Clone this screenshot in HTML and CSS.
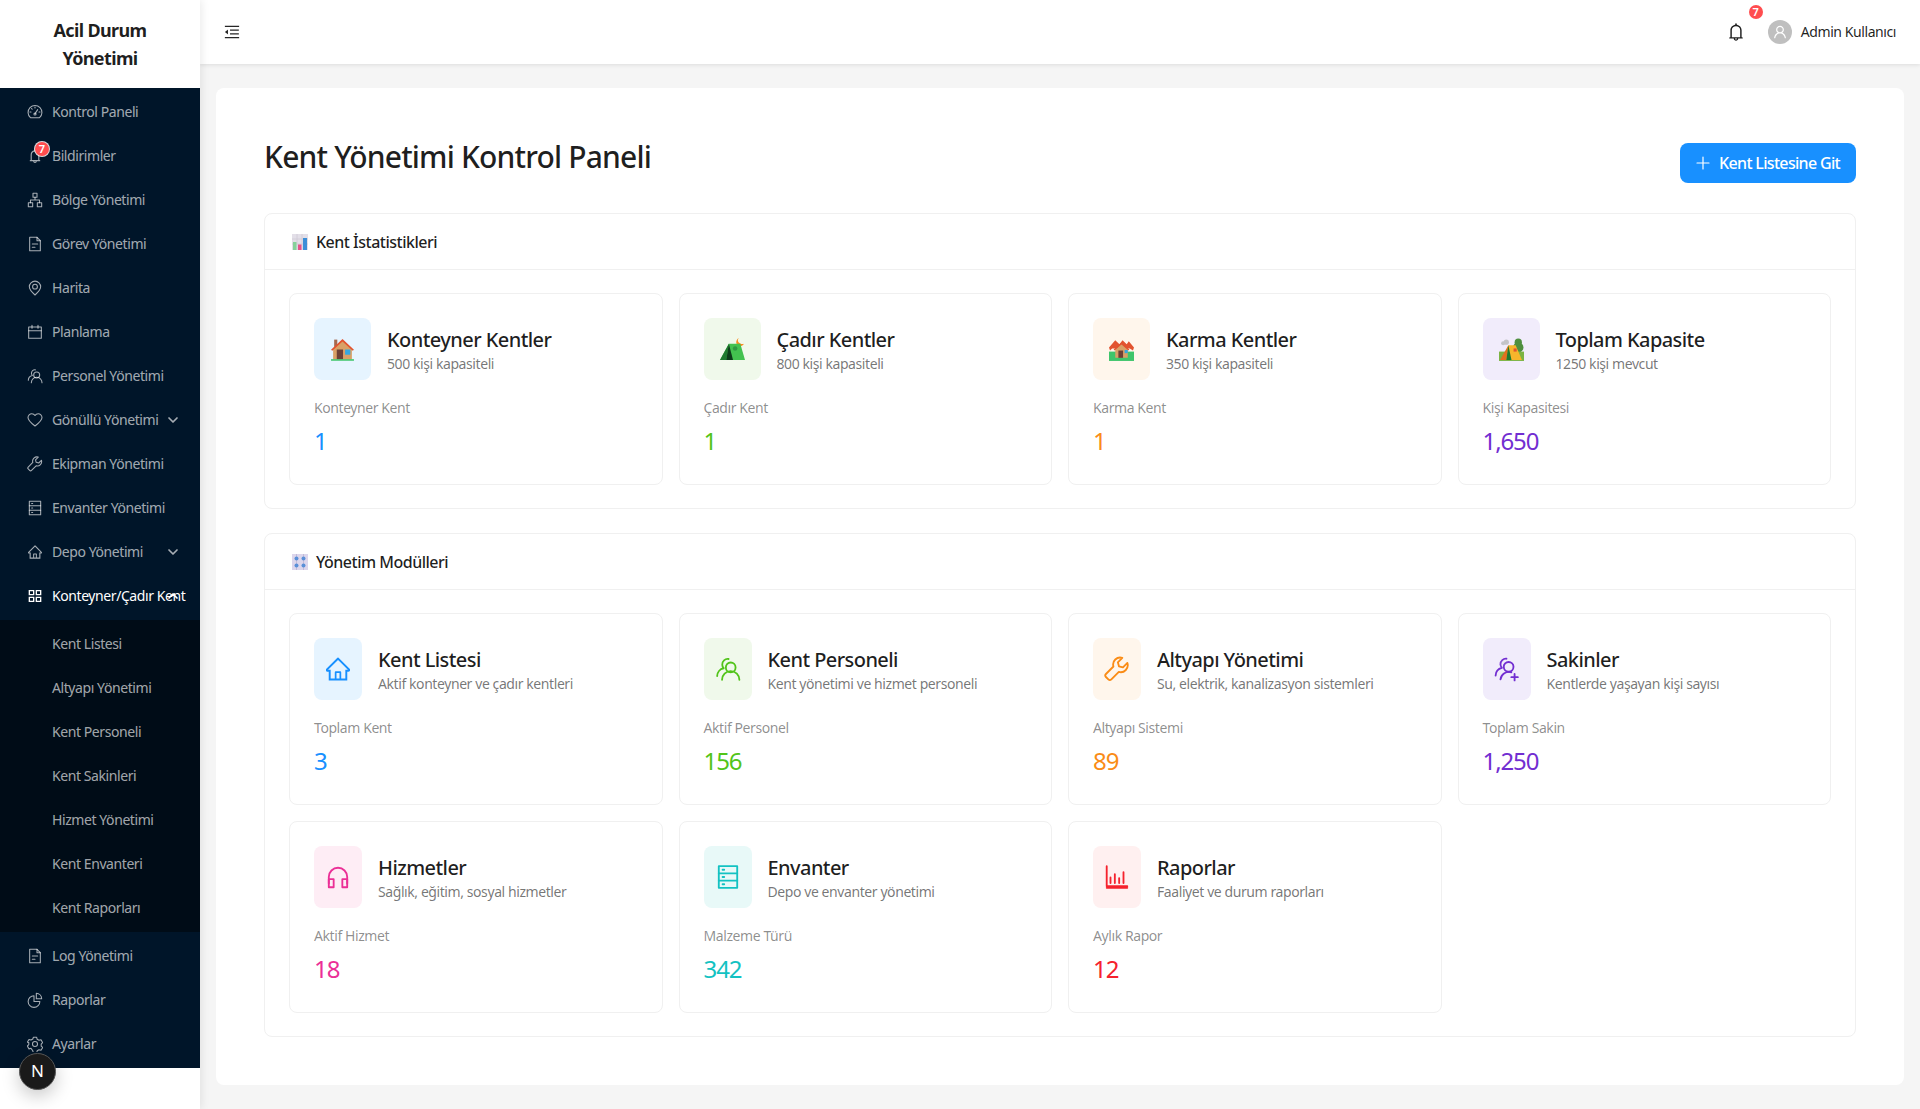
FILE: index.html
```html
<!DOCTYPE html>
<html lang="tr">
<head>
<meta charset="utf-8">
<title>Acil Durum Yönetimi</title>
<link rel="stylesheet" href="styles.css">
</head>
<body>
<svg class="defs" aria-hidden="true">
  <symbol id="i-dash" viewBox="0 0 24 24"><path d="M5.2 20.5A10.4 10.4 0 1 1 18.8 20.5Z"/><path d="M12 14.5 16 8.5"/><circle cx="12" cy="15" r="1.6"/><path d="M4.5 12H6M12 4.6V6M19.5 12H18M6.8 6.8l1 1"/></symbol>
  <symbol id="i-bell" viewBox="64 64 896 896"><path class="solid" d="M816 768h-24V428c0-141.1-104.3-257.7-240-277.1V112c0-22.1-17.9-40-40-40s-40 17.9-40 40v38.9c-135.7 19.4-240 136-240 277.1v340h-24c-17.7 0-32 14.3-32 32v32c0 4.4 3.6 8 8 8h216c0 61.8 50.2 112 112 112s112-50.2 112-112h216c4.4 0 8-3.6 8-8v-32c0-17.7-14.3-32-32-32zM512 888c-26.5 0-48-21.5-48-48h96c0 26.5-21.5 48-48 48zM304 768V428c0-55.6 21.6-107.8 60.9-147.1S456.4 220 512 220c55.6 0 107.8 21.6 147.1 60.9S720 372.4 720 428v340H304z"/></symbol>
  <symbol id="i-cluster" viewBox="0 0 24 24"><rect x="9" y="2" width="6" height="6"/><rect x="2" y="16" width="6.5" height="6"/><rect x="15.5" y="16" width="6.5" height="6"/><path d="M12 8v4M5.2 16v-4h13.6v4"/></symbol>
  <symbol id="i-file" viewBox="0 0 24 24"><path d="M4 2h11l5 5v15H4Z"/><path d="M15 2v5h5M8 12h8M8 17h4"/></symbol>
  <symbol id="i-pin" viewBox="0 0 24 24"><path d="M12 22.5C7 18 3.5 14.500 3.500 10.200a8.500 8.500 0 0 1 17 0C20.500 14.500 17 18 12 22.500Z"/><circle cx="12" cy="10" r="3.600"/></symbol>
  <symbol id="i-cal" viewBox="0 0 24 24"><rect x="2.500" y="4.500" width="19" height="17"/><path d="M2.500 10h19M7.500 2v4.500M16.500 2v4.500"/></symbol>
  <symbol id="i-team" viewBox="0 0 24 24"><circle cx="14.500" cy="10.500" r="4.500"/><path d="M6.500 22a8 8 0 0 1 16 0"/><path d="M12.500 2.800a5 5 0 0 0-5.800 5.200 5 5 0 0 0 1.300 3.300A7.500 7.500 0 0 0 2 18.500"/></symbol>
  <symbol id="i-teamadd" viewBox="0 0 24 24"><circle cx="13.500" cy="10" r="4.500"/><path d="M6 21.500a8 8 0 0 1 10-6.500"/><path d="M11.500 2.500a5 5 0 0 0-5.500 5 5 5 0 0 0 1.300 3.500A7.500 7.500 0 0 0 1.500 18"/><path d="M19 16.500v6M16 19.500h6"/></symbol>
  <symbol id="i-heart" viewBox="0 0 24 24"><path d="M12 21C5.500 16 1.500 12.500 1.500 8.200A5.700 5.700 0 0 1 7.300 2.600C9.200 2.600 11 3.600 12 5.300 13 3.600 14.800 2.600 16.700 2.600a5.700 5.700 0 0 1 5.800 5.600C22.500 12.500 18.500 16 12 21Z"/></symbol>
  <symbol id="i-tool" viewBox="0 0 24 24"><path d="M21.600 6.400 17.500 10.500 13.800 9.500 12.800 5.800 16.900 1.700A6.500 6.500 0 0 0 8.700 9.700L1.800 16.600a2 2 0 0 0 0 2.800L4 21.600a2 2 0 0 0 2.800 0L13.700 14.700A6.500 6.500 0 0 0 21.600 6.400Z"/></symbol>
  <symbol id="i-db" viewBox="0 0 24 24"><rect x="3.500" y="2" width="17" height="20"/><path d="M3.500 8.700h17M3.500 15.300h17M7 5.300h1.500M7 12h1.500M7 18.700h1.500"/></symbol>
  <symbol id="i-home" viewBox="64 64 896 896"><path class="solid" d="M946.5 505L560.1 118.8l-25.9-25.9a31.5 31.5 0 0 0-44.4 0L77.5 505a63.9 63.9 0 0 0-18.8 46c.4 35.2 29.700 63.300 64.900 63.300h42.500V940h691.800V614.300h43.400c17.100 0 33.200-6.700 45.300-18.800a63.600 63.600 0 0 0 18.700-45.300c0-17-6.700-33.100-18.800-45.200zM568 868H456V664h112v204zm217.900-325.700V868H632V640c0-22.100-17.900-40-40-40H432c-22.100 0-40 17.900-40 40v228H238.100V542.300h-96l370-369.700 23.100 23.100L882 542.300h-96.100z"/></symbol>
  <symbol id="i-apps" viewBox="0 0 24 24"><path class="solid" d="M2.500 3h8.500v8H2.500ZM13 3h8.500v8H13ZM2.500 13h8.500v8H2.500ZM13 13h8.500v8H13Z"/><path class="knock" d="M4.500 5h4.500v4H4.500ZM15 5h4.500v4H15ZM4.500 15h4.500v4H4.500ZM15 15h4.500v4H15Z"/></symbol>
  <symbol id="i-pie" viewBox="0 0 24 24"><path d="M10.500 5.500a8.800 8.800 0 1 0 8.800 8.800H10.500Z"/><path d="M14 2a8.500 8.500 0 0 1 8 8h-8Z"/></symbol>
  <symbol id="i-gear" viewBox="0 0 24 24"><path d="M9.500 2h5l.8 3 2.700 1.500 3-.8 2.500 4.300-2.200 2.200v3l2.200 2-2.500 4.300-3-.8-2.700 1.500-.8 3h-5l-.8-3L6 18.500l-3 .8L.5 15l2.200-2.200v-3L.5 9.500 3 5.200l3 .8 2.700-1.500Z"/><circle cx="12" cy="12" r="3.800"/></symbol>
  <symbol id="i-phones" viewBox="0 0 24 24"><path d="M3.500 18V12a8.500 8.500 0 0 1 17 0v6"/><rect x="3.500" y="14" width="4.500" height="7.500"/><rect x="16" y="14" width="4.500" height="7.500"/></symbol>
  <symbol id="i-chart" viewBox="0 0 24 24"><path d="M2.500 2v18.500h19M2.500 22h19"/><path d="M6 12.500v5M10 9.500v8M14 13v4.500M18 7.500v10"/></symbol>
  <symbol id="i-house" viewBox="0 0 24 24"><rect class="e-ch" x="4" y="2.500" width="3" height="7"/><path class="e-wall" d="M3 11 12 3l9 8v10.500H3Z"/><path class="e-roof" d="M1 12.300 12 2l11 10.300-1.200 1L12 4.400 2.200 13.300Z"/><rect class="e-door" x="6.500" y="12" width="6" height="9.500"/><rect class="e-win" x="14.500" y="12" width="5" height="5"/><rect class="e-grass" x="1" y="21.300" width="22" height="1.500"/></symbol>
  <symbol id="i-tent" viewBox="0 0 24 24"><path class="e-moon" d="M18 1c-1.500 2-1 4 1 5s3 1 4 .500c-1 2-4 3-6 1.500s-2-5 1-7Z"/><path class="e-tent" d="M8.500 6.500h11L24 22H0Z"/><path class="e-tdark" d="M8.500 6.500 0 22h6Z"/><path class="e-tdk2" d="M8.500 6.500 6 22h6.500Z"/><circle class="e-leaf" cx="14.500" cy="11" r="2.200"/></symbol>
  <symbol id="i-houses" viewBox="0 0 24 24"><path class="e-grass" d="M0 14h24v9H0Z"/><path class="e-roof" d="M0 10 6 3l4 4 3-4 4 4 2-3 5 6-1 3-3-2H3l-2 2Z"/><path class="e-wall" d="M6 12l6-5 6 5v8H6Z"/><path class="e-roof" d="M4.500 12 12 5l7.500 7-1 1L12 7l-6.500 6Z"/><rect class="e-door" x="9" y="13" width="4.500" height="7"/><rect class="e-win" x="15" y="12.500" width="3" height="3"/></symbol>
  <symbol id="i-camp" viewBox="0 0 24 24"><circle class="e-smoke" cx="4" cy="6" r="2"/><circle class="e-smoke" cx="7" cy="5" r="2.500"/><circle class="e-tree" cx="18.500" cy="5" r="3.500"/><circle class="e-tree" cx="18.500" cy="10" r="5"/><path class="e-grass2" d="M0 14h24v9H0Z"/><path class="e-yel" d="M9 8h7l6 14H4Z"/><path class="e-org" d="M9 8 1 22h6Z"/><path class="e-tdark" d="M9 8 7 22h5Z"/><rect class="e-roof" x="14" y="11" width="3" height="3"/></symbol>
  <symbol id="i-bars" viewBox="0 0 16 16"><rect class="e-paper" width="16" height="16"/><path class="e-gridl" d="M0 5h16M0 10h16M5 0v16M10 0v16"/><rect class="e-gbar" x="1" y="8" width="3.500" height="8"/><rect class="e-pbar" x="6" y="10.500" width="3.500" height="5.500"/><rect class="e-bbar" x="11" y="4" width="4" height="12"/></symbol>
  <symbol id="i-dial" viewBox="0 0 16 16"><rect class="e-lav" width="16" height="16"/><path class="e-slot" d="M4.500 0v16M11.500 0v16"/><circle class="e-knob" cx="4.500" cy="4.500" r="2"/><circle class="e-knob" cx="11.500" cy="4.500" r="2"/><circle class="e-knob" cx="4.500" cy="11.500" r="2"/><circle class="e-knob" cx="11.500" cy="11.500" r="2"/></symbol>
</svg>

<aside class="sidebar">
  <div class="logo">Acil Durum<br>Yönetimi</div>
  <nav class="menu">
    <a class="item"><svg class="mi"><use href="#i-dash"/></svg><span class="txt">Kontrol Paneli</span></a>
    <a class="item"><span class="bell-wrap"><svg class="mi ant"><use href="#i-bell"/></svg><b class="badge side-badge">7</b></span><span class="txt">Bildirimler</span></a>
    <a class="item"><svg class="mi"><use href="#i-cluster"/></svg><span class="txt">Bölge Yönetimi</span></a>
    <a class="item"><svg class="mi"><use href="#i-file"/></svg><span class="txt">Görev Yönetimi</span></a>
    <a class="item"><svg class="mi"><use href="#i-pin"/></svg><span class="txt">Harita</span></a>
    <a class="item"><svg class="mi"><use href="#i-cal"/></svg><span class="txt">Planlama</span></a>
    <a class="item"><svg class="mi"><use href="#i-team"/></svg><span class="txt">Personel Yönetimi</span></a>
    <a class="item"><svg class="mi"><use href="#i-heart"/></svg><span class="txt">Gönüllü Yönetimi</span><svg class="chev" viewBox="0 0 12 12"><path d="M2 4l4 4 4-4"/></svg></a>
    <a class="item"><svg class="mi"><use href="#i-tool"/></svg><span class="txt">Ekipman Yönetimi</span></a>
    <a class="item"><svg class="mi"><use href="#i-db"/></svg><span class="txt">Envanter Yönetimi</span></a>
    <a class="item"><svg class="mi ant"><use href="#i-home"/></svg><span class="txt">Depo Yönetimi</span><svg class="chev" viewBox="0 0 12 12"><path d="M2 4l4 4 4-4"/></svg></a>
    <a class="item active"><svg class="mi"><use href="#i-apps"/></svg><span class="txt">Konteyner/Çadır Kent</span><svg class="chev" viewBox="0 0 12 12"><path d="M2 8l4-4 4 4"/></svg></a>
    <div class="submenu">
      <a class="item sub"><span class="txt">Kent Listesi</span></a>
      <a class="item sub"><span class="txt">Altyapı Yönetimi</span></a>
      <a class="item sub"><span class="txt">Kent Personeli</span></a>
      <a class="item sub"><span class="txt">Kent Sakinleri</span></a>
      <a class="item sub"><span class="txt">Hizmet Yönetimi</span></a>
      <a class="item sub"><span class="txt">Kent Envanteri</span></a>
      <a class="item sub"><span class="txt">Kent Raporları</span></a>
    </div>
    <a class="item"><svg class="mi"><use href="#i-file"/></svg><span class="txt">Log Yönetimi</span></a>
    <a class="item"><svg class="mi"><use href="#i-pie"/></svg><span class="txt">Raporlar</span></a>
    <a class="item"><svg class="mi"><use href="#i-gear"/></svg><span class="txt">Ayarlar</span></a>
  </nav>
  <div class="next-badge">N</div>
</aside>

<div class="main">
  <header class="topbar">
    <svg class="fold" viewBox="64 64 896 896"><path d="M408 442h480c4.400 0 8-3.600 8-8v-56c0-4.400-3.600-8-8-8H408c-4.400 0-8 3.600-8 8v56c0 4.400 3.600 8 8 8zm-8 204c0 4.400 3.600 8 8 8h480c4.400 0 8-3.600 8-8v-56c0-4.400-3.600-8-8-8H408c-4.400 0-8 3.600-8 8v56zm504-486H120c-4.400 0-8 3.600-8 8v56c0 4.400 3.600 8 8 8h784c4.400 0 8-3.600 8-8v-56c0-4.400-3.600-8-8-8zm0 632H120c-4.400 0-8 3.600-8 8v56c0 4.400 3.600 8 8 8h784c4.400 0 8-3.600 8-8v-56c0-4.400-3.600-8-8-8zM115.400 518.900L271.700 642c5.800 4.600 14.400.5 14.400-6.900V388.900c0-7.400-8.500-11.500-14.400-6.900L115.400 505.100a8.740 8.740 0 0 0 0 13.800z"/></svg>
    <div class="top-right">
      <span class="top-bell"><svg class="bell-big"><use href="#i-bell"/></svg><b class="badge top-badge">7</b></span>
      <span class="avatar"><svg viewBox="64 64 896 896"><path d="M858.500 763.600a374 374 0 0 0-80.600-119.500 375.630 375.630 0 0 0-119.500-80.600c-.4-.2-.8-.3-1.200-.5C719.500 518 760 444.700 760 362c0-137-111-248-248-248S264 225 264 362c0 82.700 40.500 156 102.800 201.100-.4.2-.8.3-1.200.5-44.800 18.900-85 46-119.500 80.600a375.630 375.630 0 0 0-80.600 119.500A371.700 371.700 0 0 0 136 901.800a8 8 0 0 0 8 8.200h60c4.400 0 7.900-3.500 8-7.800 2-77.200 33-149.500 87.800-204.300 56.700-56.700 132-87.900 212.200-87.900s155.500 31.200 212.200 87.900C779 752.700 810 825 812 902.200c.1 4.400 3.600 7.800 8 7.800h60a8 8 0 0 0 8-8.200c-1-47.800-10.900-94.300-29.500-138.200zM512 534c-45.900 0-89.100-17.900-121.600-50.400S340 407.900 340 362c0-45.900 17.900-89.100 50.400-121.600S466.100 190 512 190s89.100 17.900 121.600 50.400S684 316.100 684 362c0 45.900-17.900 89.100-50.400 121.600S557.900 534 512 534z"/></svg></span>
      <span class="user-name">Admin Kullanıcı</span>
    </div>
  </header>

  <main class="content">
    <div class="panel">
      <div class="page-head">
        <h1>Kent Yönetimi Kontrol Paneli</h1>
        <a class="btn"><svg viewBox="0 0 14 14"><path d="M7 1v12M1 7h12"/></svg>Kent Listesine Git</a>
      </div>

      <section class="section">
        <h2 class="section-head"><svg class="sec-ic"><use href="#i-bars"/></svg>Kent İstatistikleri</h2>
        <div class="tiles">
          <article class="tile t-blue"><div class="tile-top"><span class="tile-ic wide"><svg class="emoji"><use href="#i-house"/></svg></span><div class="tile-txt"><h3>Konteyner Kentler</h3><p>500 kişi kapasiteli</p></div></div><div class="lbl">Konteyner Kent</div><div class="val">1</div></article>
          <article class="tile t-green"><div class="tile-top"><span class="tile-ic wide"><svg class="emoji"><use href="#i-tent"/></svg></span><div class="tile-txt"><h3>Çadır Kentler</h3><p>800 kişi kapasiteli</p></div></div><div class="lbl">Çadır Kent</div><div class="val">1</div></article>
          <article class="tile t-orange"><div class="tile-top"><span class="tile-ic wide"><svg class="emoji"><use href="#i-houses"/></svg></span><div class="tile-txt"><h3>Karma Kentler</h3><p>350 kişi kapasiteli</p></div></div><div class="lbl">Karma Kent</div><div class="val">1</div></article>
          <article class="tile t-purple"><div class="tile-top"><span class="tile-ic wide"><svg class="emoji"><use href="#i-camp"/></svg></span><div class="tile-txt"><h3>Toplam Kapasite</h3><p>1250 kişi mevcut</p></div></div><div class="lbl">Kişi Kapasitesi</div><div class="val">1,650</div></article>
        </div>
      </section>

      <section class="section">
        <h2 class="section-head"><svg class="sec-ic"><use href="#i-dial"/></svg>Yönetim Modülleri</h2>
        <div class="tiles">
          <article class="tile t-blue"><div class="tile-top"><span class="tile-ic"><svg class="modi ant"><use href="#i-home"/></svg></span><div class="tile-txt"><h3>Kent Listesi</h3><p>Aktif konteyner ve çadır kentleri</p></div></div><div class="lbl">Toplam Kent</div><div class="val">3</div></article>
          <article class="tile t-green"><div class="tile-top"><span class="tile-ic"><svg class="modi"><use href="#i-team"/></svg></span><div class="tile-txt"><h3>Kent Personeli</h3><p>Kent yönetimi ve hizmet personeli</p></div></div><div class="lbl">Aktif Personel</div><div class="val">156</div></article>
          <article class="tile t-orange"><div class="tile-top"><span class="tile-ic"><svg class="modi"><use href="#i-tool"/></svg></span><div class="tile-txt"><h3>Altyapı Yönetimi</h3><p>Su, elektrik, kanalizasyon sistemleri</p></div></div><div class="lbl">Altyapı Sistemi</div><div class="val">89</div></article>
          <article class="tile t-purple"><div class="tile-top"><span class="tile-ic"><svg class="modi"><use href="#i-teamadd"/></svg></span><div class="tile-txt"><h3>Sakinler</h3><p>Kentlerde yaşayan kişi sayısı</p></div></div><div class="lbl">Toplam Sakin</div><div class="val">1,250</div></article>
          <article class="tile t-pink"><div class="tile-top"><span class="tile-ic"><svg class="modi"><use href="#i-phones"/></svg></span><div class="tile-txt"><h3>Hizmetler</h3><p>Sağlık, eğitim, sosyal hizmetler</p></div></div><div class="lbl">Aktif Hizmet</div><div class="val">18</div></article>
          <article class="tile t-cyan"><div class="tile-top"><span class="tile-ic"><svg class="modi"><use href="#i-db"/></svg></span><div class="tile-txt"><h3>Envanter</h3><p>Depo ve envanter yönetimi</p></div></div><div class="lbl">Malzeme Türü</div><div class="val">342</div></article>
          <article class="tile t-red"><div class="tile-top"><span class="tile-ic"><svg class="modi"><use href="#i-chart"/></svg></span><div class="tile-txt"><h3>Raporlar</h3><p>Faaliyet ve durum raporları</p></div></div><div class="lbl">Aylık Rapor</div><div class="val">12</div></article>
        </div>
      </section>
    </div>
  </main>
</div>
</body>
</html>
```

FILE: styles.css
```css
* { box-sizing: border-box; }
html, body { height: 100%; }
body {
  margin: 0;
  display: flex;
  height: 1109px;
  overflow: hidden;
  background: #f5f5f5;
  color: rgba(0, 0, 0, .88);
  font-family: "Noto Sans", "Open Sans", sans-serif;
  font-size: 14px;
  letter-spacing: -.03em;
}
.defs { position: absolute; width: 0; height: 0; }
svg { fill: none; stroke: currentColor; stroke-width: 1.8; stroke-linejoin: round; stroke-linecap: round; display: block; }
.solid { fill: currentColor; stroke: none; }
.knock { fill: #001529; stroke: none; }
.active .knock { fill: #001f3b; }

.sidebar { position: relative; flex: 0 0 200px; width: 200px; background: #fff; box-shadow: 2px 0 8px rgba(0, 0, 0, .08); z-index: 2; }
.logo { height: 88px; padding-top: 16px; font-size: 18px; font-weight: 700; line-height: 28px; text-align: center; color: rgba(0, 0, 0, .88); letter-spacing: -.035em; }
.menu { background: #001529; padding: 4px 0; height: 980px; color: rgba(255, 255, 255, .65); }
.item { position: relative; display: flex; align-items: center; gap: 10px; height: 40px; padding-left: 28px; margin-bottom: 4px; white-space: nowrap; }
.menu > .item:last-child { margin-bottom: 0; }
.item.active { color: #fff; }
.item.sub { padding-left: 52px; }
.txt { margin-top: -2px; }
.submenu { background: #000c17; padding: 4px 0; margin-bottom: 4px; }
.submenu .item:last-child { margin-bottom: 0; }
.mi { flex: none; width: 16px; height: 16px; margin: 0 -1px; stroke-width: 1.6; }
.mi.ant { width: 14px; height: 14px; margin: 0; }
.chev { position: absolute; left: 167px; top: 14px; width: 12px; height: 12px; stroke-width: 1.7; }
.bell-wrap { position: relative; display: block; }
.badge { position: absolute; display: block; width: 14px; height: 14px; border-radius: 50%; background: #ff4d4f; color: #fff; font-size: 11px; font-weight: 600; line-height: 14px; text-align: center; letter-spacing: 0; }
.side-badge { left: 7px; top: -7px; box-shadow: 0 0 0 1px rgba(255, 255, 255, .85); }
.next-badge { position: absolute; left: 19px; top: 1053px; width: 37px; height: 37px; border-radius: 50%; background: #1a1a1a; color: #fff; border: 1px solid #555; box-shadow: 0 6px 18px rgba(0, 0, 0, .22); font-size: 17px; font-weight: 400; line-height: 34px; text-align: center; letter-spacing: 0; }

.main { flex: 1; min-width: 0; display: flex; flex-direction: column; }
.topbar { position: relative; z-index: 1; flex: none; height: 64px; background: #fff; box-shadow: 0 1px 4px rgba(0, 0, 0, .1); display: flex; align-items: center; justify-content: space-between; padding: 0 24px; }
.fold { width: 16px; height: 16px; fill: rgba(0, 0, 0, .85); stroke: none; }
.top-right { display: flex; align-items: center; }
.top-bell { position: relative; display: block; margin-right: 23px; }
.bell-big { width: 18px; height: 18px; display: block; color: rgba(0, 0, 0, .88); }
.top-badge { left: 22px; top: -18px; }
.avatar { display: flex; align-items: center; justify-content: center; width: 24px; height: 24px; border-radius: 50%; background: #bfbfbf; color: #fff; margin-right: 9px; }
.avatar svg { width: 14px; height: 14px; fill: currentColor; stroke: none; }
.user-name { color: rgba(0, 0, 0, .88); margin-top: -2px; }

.content { flex: 1; padding: 24px 16px; min-height: 0; }
.panel { height: 997px; background: #fff; border-radius: 8px; padding: 48px; }
.page-head { display: flex; justify-content: space-between; align-items: flex-start; margin-bottom: 30px; }
h1 { margin: 0; font-size: 30px; line-height: 42px; font-weight: 500; letter-spacing: -.83px; color: rgba(0, 0, 0, .88); }
.btn { margin-top: 7px; height: 40px; display: flex; align-items: center; gap: 9px; padding: 0 16px; background: #1890ff; color: #fff; border-radius: 8px; font-size: 16px; font-weight: 500; letter-spacing: -.68px; }
.btn svg { width: 14px; height: 14px; stroke-width: 1.2; }

.section { border: 1px solid #f0f0f0; border-radius: 8px; margin-bottom: 24px; }
.section-head { display: flex; align-items: center; gap: 8px; height: 56px; margin: 0; padding: 0 24px 0 27px; border-bottom: 1px solid #f0f0f0; font-size: 16px; font-weight: 500; letter-spacing: -.5px; color: rgba(0, 0, 0, .88); }
.sec-ic { width: 16px; height: 16px; flex: none; stroke: none; }
.tiles { display: grid; grid-template-columns: repeat(4, 1fr); gap: 16px; padding: 23px 24px; }
.tile { border: 1px solid #f0f0f0; border-radius: 8px; padding: 24px; height: 192px; }
.tile-top { display: flex; align-items: center; gap: 16px; margin-bottom: 17px; }
.tile-txt { padding-top: 2px; }
.tile-ic { flex: none; display: flex; align-items: center; justify-content: center; width: 48px; height: 62px; border-radius: 8px; }
.tile-ic.wide { width: 57px; }
.emoji { width: 25px; height: 25px; stroke: none; }
.modi { width: 26px; height: 26px; stroke-width: 1.7; }
.modi.ant { width: 24px; height: 24px; }
h3 { margin: 0; padding-top: 1px; font-size: 20px; line-height: 28px; font-weight: 500; letter-spacing: -.57px; color: rgba(0, 0, 0, .88); }
.tile-top p { margin: -1px 0 0; font-size: 14px; line-height: 22px; color: rgba(0, 0, 0, .55); }
.lbl { line-height: 22px; color: rgba(0, 0, 0, .45); }
.val { font-size: 24px; line-height: 38px; margin-top: 3px; letter-spacing: -1.1px; }

.t-blue .tile-ic { background: #e6f4ff; color: #1890ff; }
.t-green .tile-ic { background: #f0f9eb; color: #52c41a; }
.t-orange .tile-ic { background: #fff6ec; color: #fa8c16; }
.t-purple .tile-ic { background: #f1ecfb; color: #722ed1; }
.t-pink .tile-ic { background: #feedf5; color: #eb2f96; }
.t-cyan .tile-ic { background: #e8f9f8; color: #13c2c2; }
.t-red .tile-ic { background: #fff0f0; color: #f5222d; }
.t-blue .val { color: #1890ff; }
.t-green .val { color: #52c41a; }
.t-orange .val { color: #fa8c16; }
.t-purple .val { color: #722ed1; }
.t-pink .val { color: #eb2f96; }
.t-cyan .val { color: #13c2c2; }
.t-red .val { color: #f5222d; }

.e-ch { fill: #a5694f; }
.e-wall { fill: #d9a066; }
.e-roof { fill: #e2532f; }
.e-door { fill: #6d4035; }
.e-win { fill: #35a8e0; }
.e-grass { fill: #3fc56b; }
.e-grass2 { fill: #7cb342; }
.e-moon { fill: #f98c1f; }
.e-tent { fill: #43c24f; }
.e-tdark { fill: #1f7a2f; }
.e-tdk2 { fill: #0d3d1a; }
.e-leaf { fill: #2f9a42; }
.e-smoke { fill: #c4c4c8; }
.e-tree { fill: #4f8f3f; }
.e-yel { fill: #f7b52c; }
.e-org { fill: #e2701f; }
.e-paper { fill: #e3dfe8; }
.e-gridl { stroke: #cfc9d6; stroke-width: .8; }
.e-gbar { fill: #86d19a; }
.e-pbar { fill: #e8528a; }
.e-bbar { fill: #3b8fd8; }
.e-lav { fill: #dcd6ec; }
.e-slot { stroke: #c2bbd8; stroke-width: 1; }
.e-knob { fill: #5a90d8; }
```
